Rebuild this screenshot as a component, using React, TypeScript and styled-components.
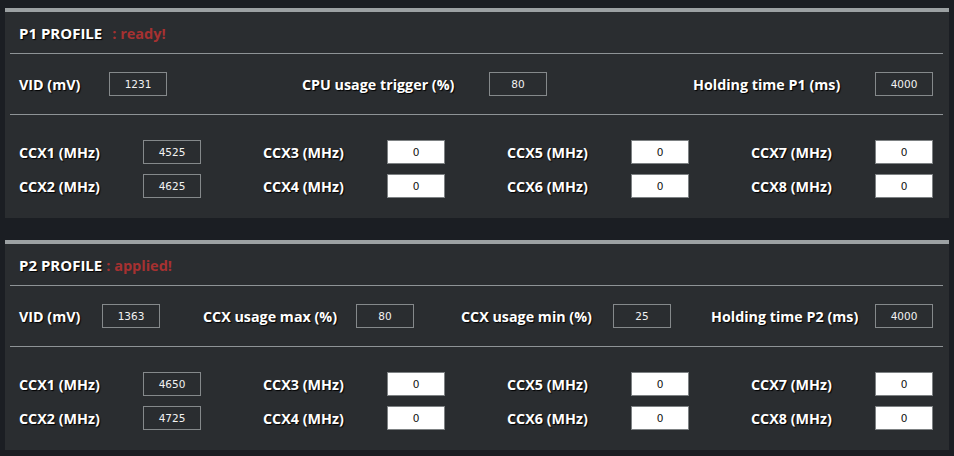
import styled, { createGlobalStyle } from "styled-components";

const GlobalStyle = createGlobalStyle`
  html, body {
    margin: 0;
    padding: 0;
    background: #1b1e23;
  }
  * {
    box-sizing: border-box;
  }
`;

type FieldDef = { label: string; value: string; labelWidth: number };

const p1Fields: FieldDef[] = [
  { label: "VID (mV)", value: "1231", labelWidth: 90 },
  { label: "CPU usage trigger (%)", value: "80", labelWidth: 187 },
  { label: "Holding time P1 (ms)", value: "4000", labelWidth: 182 },
];

const p2Fields: FieldDef[] = [
  { label: "VID (mV)", value: "1363", labelWidth: 83 },
  { label: "CCX usage max (%)", value: "80", labelWidth: 153 },
  { label: "CCX usage min (%)", value: "25", labelWidth: 152 },
  { label: "Holding time P2 (ms)", value: "4000", labelWidth: 164 },
];

const ccxOrder = [1, 3, 5, 7, 2, 4, 6, 8];

const Profile = ({
  name,
  status,
  statusGap,
  fields,
  columns,
  ccx,
}: {
  name: string;
  status: string;
  statusGap: number;
  fields: FieldDef[];
  columns: string;
  ccx: Record<number, string>;
}) => (
  <StPanel>
    <StHeader>
      <StTitle>{name}</StTitle>
      <StStatus $gap={statusGap}>{status}</StStatus>
    </StHeader>
    <StDivider />
    <StTopRow $columns={columns}>
      {fields.map((f) => (
        <StField key={f.label}>
          <StLabel $width={f.labelWidth}>{f.label}</StLabel>
          <StBox readOnly value={f.value} />
        </StField>
      ))}
    </StTopRow>
    <StDivider />
    <StCcxGrid>
      {ccxOrder.map((n) => (
        <StField key={n}>
          <StLabel $width={124}>CCX{n} (MHz)</StLabel>
          <StBox readOnly value={ccx[n] ?? "0"} $light={n > 2} />
        </StField>
      ))}
    </StCcxGrid>
  </StPanel>
);

export default function App() {
  return (
    <>
      <GlobalStyle />
      <StPage>
        <Profile
          name="P1 PROFILE"
          status=": ready!"
          statusGap={10}
          fields={p1Fields}
          columns="283px 391px 1fr"
          ccx={{ 1: "4525", 2: "4625" }}
        />
        <Profile
          name="P2 PROFILE"
          status=": applied!"
          statusGap={4}
          fields={p2Fields}
          columns="184px 258px 250px 1fr"
          ccx={{ 1: "4650", 2: "4725" }}
        />
      </StPage>
    </>
  );
}

const StPage = styled.div`
  width: 954px;
  height: 456px;
  padding: 8px 5px 0 5px;
  display: flex;
  flex-direction: column;
  gap: 22px;
  font-family: "Open Sans", "DejaVu Sans", sans-serif;
`;

const StPanel = styled.section`
  width: 944px;
  background: #2a2d30;
  border-top: 4px solid #9ca1a3;
  padding-bottom: 20px;
`;

const StHeader = styled.div`
  height: 41px;
  display: flex;
  align-items: center;
  padding-left: 14px;
  padding-top: 1px;
`;

const StTitle = styled.span`
  color: #ffffff;
  font-size: 15px;
  font-weight: 700;
  text-shadow: 1px 1px 1px #000;
`;

const StStatus = styled.span<{ $gap: number }>`
  margin-left: ${(p) => p.$gap}px;
  color: #a63131;
  font-size: 14.5px;
  font-weight: 700;
`;

const StDivider = styled.div`
  height: 1px;
  margin: 0 6px 0 5px;
  background: #8e9396;
`;

const StTopRow = styled.div<{ $columns: string }>`
  height: 60px;
  display: grid;
  grid-template-columns: ${(p) => p.$columns};
  align-items: center;
  padding-left: 14px;
`;

const StField = styled.div`
  display: flex;
  align-items: center;
`;

const StLabel = styled.span<{ $width: number }>`
  width: ${(p) => p.$width}px;
  flex-shrink: 0;
  color: #ffffff;
  font-size: 14.3px;
  font-weight: 700;
  white-space: nowrap;
  text-shadow: 1px 1px 1px #000;
`;

const StBox = styled.input<{ $light?: boolean }>`
  width: 58px;
  height: 24px;
  padding: 0;
  border: 1px solid ${(p) => (p.$light ? "#7d8183" : "#85898b")};
  background: ${(p) => (p.$light ? "#ffffff" : "#2a2d30")};
  color: ${(p) => (p.$light ? "#111111" : "#f2f2f2")};
  font-family: "DejaVu Sans", sans-serif;
  font-size: 10.5px;
  text-align: center;
  outline: none;
`;

const StCcxGrid = styled.div`
  display: grid;
  grid-template-columns: repeat(4, 244px);
  row-gap: 10px;
  padding: 25px 0 0 14px;
`;
